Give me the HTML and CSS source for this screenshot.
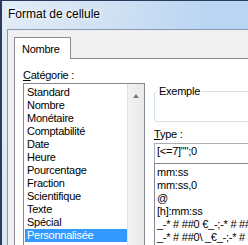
FILE: index.html
```html
<!DOCTYPE html>
<html lang="fr">
<head>
    <meta charset="UTF-8">
    <title>Format de cellule</title>
    <link rel="stylesheet" href="styles.css">
</head>
<body>
    <div class="window">
        <div class="titlebar">Format de cellule</div>
        <div class="client">
            <div class="tabs">
                <div class="tab">Nombre</div>
            </div>
            <div class="panel">
                <div class="col-left">
                    <div class="label"><u>C</u>atégorie :</div>
                    <div class="listbox">
                        <ul class="items">
                            <li>Standard</li>
                            <li>Nombre</li>
                            <li>Monétaire</li>
                            <li>Comptabilité</li>
                            <li>Date</li>
                            <li>Heure</li>
                            <li>Pourcentage</li>
                            <li>Fraction</li>
                            <li>Scientifique</li>
                            <li>Texte</li>
                            <li>Spécial</li>
                            <li class="selected">Personnalisée</li>
                        </ul>
                        <div class="scrollbar">
                            <div class="scroll-btn"><span class="arrow-up"></span></div>
                        </div>
                    </div>
                </div>
                <div class="col-right">
                    <div class="group">
                        <div class="group-title">Exemple</div>
                    </div>
                    <div class="label"><u>T</u>ype :</div>
                    <div class="type-input">[&lt;=7]"";0</div>
                    <ul class="type-list">
                        <li>mm:ss</li>
                        <li>mm:ss,0</li>
                        <li>@</li>
                        <li>[h]:mm:ss</li>
                        <li>_-* # ##0 €_-;-* # ##0 €_-;_-* "-" €_-;_-@_-</li>
                        <li>_-* # ##0\ _€_-;-* # ##0\ _€_-;_-* "-"\ _€_-;_-@_-</li>
                    </ul>
                </div>
            </div>
        </div>
    </div>
</body>
</html>
```

FILE: styles.css
```css
* {
    margin: 0;
    padding: 0;
    box-sizing: border-box;
}

body {
    width: 248px;
    height: 245px;
    overflow: hidden;
    font-family: 'Liberation Sans', Arial, sans-serif;
    font-size: 11px;
    line-height: 13px;
    letter-spacing: -0.25px;
    color: #000;
}

.window {
    width: 420px;
    height: 245px;
    padding-left: 5px;
    border-top: 1px solid #2a3b5e;
    border-left: 2px solid #2a3b5e;
    background: linear-gradient(100deg, #e2ecf7 0%, #cfe0f3 25%, #bad6f3 45%, #b9d5f2 100%);
}

.titlebar {
    height: 28px;
    padding: 6px 0 0 1px;
    font-size: 12px;
    line-height: 15px;
    letter-spacing: 0;
    text-shadow: 0 0 6px #fff, 0 0 3px #fff;
}

.client {
    height: 216px;
    padding: 7px 0 0 6px;
    background: #f0f0f0;
    border-top: 1px solid #8499b6;
    border-left: 1px solid #8499b6;
}

.tabs {
    display: flex;
}

.tab {
    position: relative;
    width: 57px;
    height: 22px;
    margin-bottom: -1px;
    padding: 5px 0 0 7px;
    background: #fff;
    border: 1px solid #898c95;
    border-bottom: none;
}

.panel {
    display: grid;
    grid-template-columns: 122px 1fr;
    column-gap: 9px;
    height: 200px;
    padding-left: 8px;
    background: #fff;
    border: 1px solid #898c95;
}

.col-left {
    padding-top: 10px;
}

.label u {
    text-decoration: underline;
}

.listbox {
    display: flex;
    height: 170px;
    margin-top: 1px;
    border: 1px solid #828790;
}

.items {
    flex: 1;
    list-style: none;
    padding: 2px 0 0 1px;
}

.items li {
    height: 13px;
    padding-left: 2px;
    white-space: nowrap;
}

.items li.selected {
    background: #3399ff;
    color: #fff;
}

.scrollbar {
    width: 17px;
    border-left: 1px dotted #c5daf0;
    background: linear-gradient(to right, #f2f2f2, #e9e9e9);
}

.scroll-btn {
    display: flex;
    justify-content: center;
    height: 17px;
    padding-top: 10px;
}

.arrow-up {
    width: 0;
    height: 0;
    border-left: 3.5px solid transparent;
    border-right: 3.5px solid transparent;
    border-bottom: 4px solid #7b7b7b;
}

.col-right {
    padding-top: 32px;
}

.group {
    height: 31px;
    border: 1px solid #d5dfe5;
    border-radius: 3px;
}

.group-title {
    width: fit-content;
    margin: -7px 0 0 2px;
    padding: 0 2px;
    background: #fff;
}

.col-right .label {
    margin-top: 6px;
}

.type-input {
    height: 21px;
    margin-top: 2px;
    padding: 1px 2px;
    border: 1px solid #abadb3;
    white-space: nowrap;
}

.type-list {
    height: 120px;
    margin-top: -1px;
    padding: 2px 0 0 2px;
    list-style: none;
    border: 1px solid #828790;
}

.type-list li {
    height: 13px;
    white-space: nowrap;
}
```
